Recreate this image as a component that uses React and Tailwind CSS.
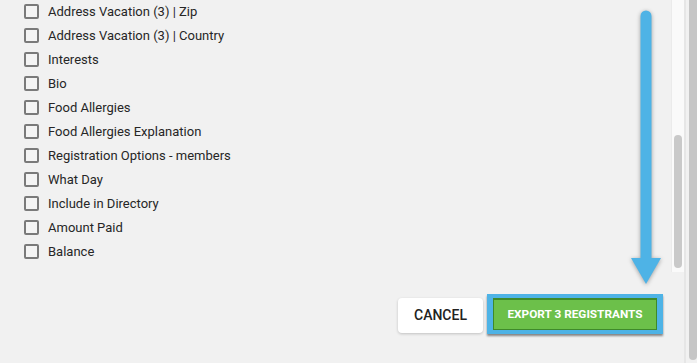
const fields = [
    'Address Vacation (3) | Zip',
    'Address Vacation (3) | Country',
    'Interests',
    'Bio',
    'Food Allergies',
    'Food Allergies Explanation',
    'Registration Options - members',
    'What Day',
    'Include in Directory',
    'Amount Paid',
    'Balance',
];

const DownArrow = () => (
    <svg
        className="absolute left-[628px] top-[8px] drop-shadow-[0_1px_2px_rgba(0,0,0,0.35)]"
        width="38"
        height="280"
        viewBox="0 0 38 280"
    >
        <line x1="18" y1="8" x2="18" y2="252" stroke="#4eb3e6" strokeWidth="11" strokeLinecap="round" />
        <polygon points="3,250 33,250 18,276" fill="#4eb3e6" />
    </svg>
);

const App = () => {
    return (
        <div className="relative w-[697px] h-[363px] bg-[#f1f1f1] flex overflow-hidden font-['Roboto',sans-serif]">
            <div className="flex-1 flex flex-col">
                {/* list + inner scroll track */}
                <div className="h-[272px] flex">
                    <div className="flex-1 pl-6">
                        {fields.map((name) => (
                            <label key={name} className="h-6 pb-[2px] flex items-center gap-[9px]">
                                <span className="w-[15px] h-[15px] rounded-[2px] border-2 border-[#7a7a7a] bg-[#f4f4f4]" />
                                <span className="text-[13px] text-[#262626] leading-none">{name}</span>
                            </label>
                        ))}
                    </div>
                    <div className="w-[13px] bg-[#fafafa] border-l border-[#ebebeb] flex flex-col pt-[135px] pb-[4px] items-center">
                        <div className="w-2 h-[133px] rounded-full bg-[#c9c9c9]" />
                    </div>
                </div>

                {/* footer */}
                <div className="flex-1 flex justify-end items-start pt-[22px] pr-[21px] gap-1">
                    <button className="mt-[4px] w-[85px] h-[35px] bg-white rounded-[4px] shadow-[0_1px_3px_rgba(0,0,0,0.2)] text-[14px] font-medium text-[#222]">
                        CANCEL
                    </button>
                    <div className="w-[176px] h-[40px] bg-[#4eb3e6] py-[4px] px-[6px] shadow-[0_2px_2px_rgba(0,0,0,0.45)]">
                        <button className="w-full h-full bg-[#6cc04a] border-t-2 border-[#3f8a2a] border-b border-x text-white text-[11.8px] font-bold">
                            EXPORT 3 REGISTRANTS
                        </button>
                    </div>
                </div>
            </div>

            {/* outer page scrollbar */}
            <div className="w-[13px] flex">
                <div className="w-[2px] bg-[#e6e6e6]" />
                <div className="w-[3px]" />
                <div className="w-2 h-[360px] bg-[#c6c6c6] rounded-b-full" />
            </div>

            <DownArrow />
        </div>
    );
};

export default App;
